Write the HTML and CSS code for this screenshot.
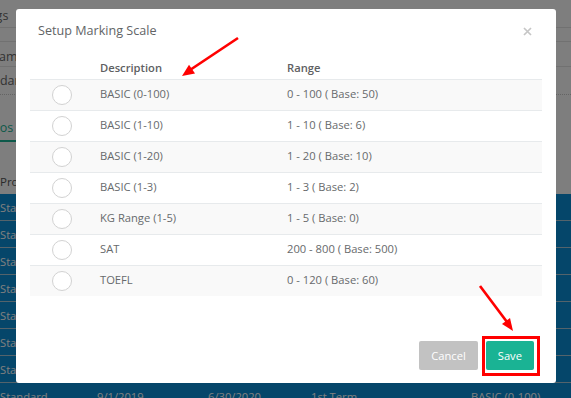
FILE: index.html
```html
<!DOCTYPE html>
<html lang="en">
<head>
    <meta charset="UTF-8">
    <meta name="viewport" content="width=device-width, initial-scale=1.0">
    <title>Setup Marking Scale</title>
    <link rel="stylesheet" href="styles.css">
</head>
<body>
    <div class="page">
        <div class="crumb"><span class="cut cut-crumb">Settings</span></div>
        <div class="gap"></div>
        <div class="label"><span class="cut cut-label">Program</span></div>
        <div class="field"><span class="cut cut-field">Standard</span></div>
        <div class="tabs"><span class="tab"><span class="cut cut-tab">Scenarios</span></span></div>
        <div class="grid-head"><span class="cut cut-head">Program</span></div>
        <div class="grid" id="grid">
            <!-- rows are generated below -->
        </div>
    </div>

    <div class="backdrop"></div>

    <div class="modal">
        <div class="modal-header">
            <h4 class="modal-title">Setup Marking Scale</h4>
            <span class="close">
                <svg width="9" height="9" viewBox="0 0 9 9"><path d="M1 1 L8 8 M8 1 L1 8" stroke="#c6c6c6" stroke-width="1.7" fill="none"/></svg>
            </span>
        </div>
        <table class="scales">
            <thead>
                <tr>
                    <th class="col-radio"></th>
                    <th class="col-desc">Description</th>
                    <th>Range</th>
                </tr>
            </thead>
            <tbody id="scaleRows"></tbody>
        </table>
        <div class="modal-footer">
            <button class="btn btn-cancel">Cancel</button>
            <button class="btn btn-save">Save</button>
        </div>
    </div>

    <div class="highlight"></div>
    <svg class="arrows" width="571" height="398" viewBox="0 0 571 398">
        <line x1="238" y1="38" x2="190" y2="70" stroke="#f00" stroke-width="2.6"/>
        <polygon points="182,76 195,73.6 189,64.8" fill="#f00"/>
        <line x1="480" y1="286" x2="507" y2="322" stroke="#f00" stroke-width="2.6"/>
        <polygon points="513,331 502,324 510,318" fill="#f00"/>
    </svg>

    <script>
        const scales = [
            ['BASIC (0-100)', '0 - 100 ( Base: 50)'],
            ['BASIC (1-10)', '1 - 10 ( Base: 6)'],
            ['BASIC (1-20)', '1 - 20 ( Base: 10)'],
            ['BASIC (1-3)', '1 - 3 ( Base: 2)'],
            ['KG Range (1-5)', '1 - 5 ( Base: 0)'],
            ['SAT', '200 - 800 ( Base: 500)'],
            ['TOEFL', '0 - 120 ( Base: 60)']
        ];
        const scaleRows = document.getElementById('scaleRows');
        scales.forEach(s => {
            const tr = document.createElement('tr');
            tr.innerHTML = `<td class="pick"><span class="radio"></span></td><td>${s[0]}</td><td>${s[1]}</td>`;
            scaleRows.appendChild(tr);
        });

        // background grid rows (only what shows around the dialog)
        const grid = document.getElementById('grid');
        for (let i = 0; i < 8; i++) {
            const row = document.createElement('div');
            row.classList.add('grid-row');
            const cells = i < 7 ? ['Standard'] : ['Standard', '9/1/2019', '6/30/2020', '1st Term', 'BASIC (0-100)'];
            cells.forEach(t => {
                const cell = document.createElement('span');
                cell.textContent = t;
                row.appendChild(cell);
            });
            if (i < 7) row.classList.add('hidden-row');
            grid.appendChild(row);
        }
    </script>
</body>
</html>
```

FILE: styles.css
```css
body {
    margin: 0;
    width: 571px;
    height: 398px;
    overflow: hidden;
    font-family: "Open Sans", sans-serif;
    background: #fdfdfd;
    position: relative;
}
.page {
    font-size: 12.5px;
    color: #666;
}
.cut {
    display: inline-block;
    white-space: nowrap;
}
.crumb {
    height: 27px;
    line-height: 31px;
    border-bottom: 1px solid #e2e2e2;
}
.cut-crumb { margin-left: -38px; }
.gap {
    height: 13px;
    border-bottom: 1px solid #e2e2e2;
}
.label {
    height: 24px;
    line-height: 29px;
    border-bottom: 1px solid #e2e2e2;
}
.cut-label { margin-left: -33px; }
.field {
    height: 27px;
    line-height: 27px;
    border-bottom: 1px dotted #c8c8c8;
}
.cut-field { margin-left: -26px; }
.tabs {
    height: 46px;
}
.tab {
    display: inline-block;
    margin-top: 21px;
    width: 16px;
    height: 24px;
    line-height: 24px;
    overflow: hidden;
    color: #1ab394;
    border-bottom: 2px solid #1ab394;
}
.cut-tab { margin-left: -43px; }
.grid-head {
    height: 53px;
    line-height: 20px;
    box-sizing: border-box;
    padding-top: 31px;
    font-size: 11.5px;
    color: #555;
}
.grid {
    background: #0a8cd4;
}
.grid-row {
    display: grid;
    grid-template-columns: 97px 111px 103px 160px 1fr;
    height: 26px;
    line-height: 28px;
    font-size: 11.2px;
    color: #fff;
    border-bottom: 1px solid #a9c7d6;
    white-space: nowrap;
}
.hidden-row {
    grid-template-columns: 16px;
    overflow: hidden;
}
.hidden-row span {
    overflow: hidden;
}
.backdrop {
    position: absolute;
    inset: 0;
    background: rgba(0, 0, 0, 0.5);
}
.modal {
    position: absolute;
    top: 9px;
    left: 16px;
    width: 540px;
    height: 374px;
    box-sizing: border-box;
    padding: 0 14px 13px;
    background: #fff;
    border-radius: 3px;
    display: flex;
    flex-direction: column;
    color: #676a6c;
}
.modal-header {
    display: flex;
    justify-content: space-between;
    align-items: center;
    padding-top: 12px;
    margin-bottom: 14px;
}
.modal-title {
    margin: 0 0 0 8px;
    font-size: 12.6px;
    font-weight: 400;
    line-height: 20px;
    color: #626466;
}
.close {
    display: flex;
    margin-right: 10px;
}
.scales {
    width: 100%;
    border-collapse: separate;
    border-spacing: 0;
    font-size: 11.2px;
}
.scales th {
    height: 24px;
    padding: 0;
    text-align: left;
    font-weight: 600;
    color: #5e6062;
}
.scales .col-radio { width: 70px; }
.scales .col-desc { width: 187px; }
.scales td {
    height: 26px;
    padding: 0 0 4px;
    border-top: 1px solid #e7eaec;
    vertical-align: middle;
}
.scales td.pick {
    padding: 0 0 1px;
    height: 29px;
}
.scales tbody tr:nth-child(odd) td {
    background: #f9f9f9;
}
.radio {
    display: block;
    width: 20px;
    height: 20px;
    margin-left: 22px;
    box-sizing: border-box;
    border: 1px solid #d2d2d2;
    border-radius: 50%;
    background: #fff;
}
.modal-footer {
    margin-top: auto;
    display: flex;
    justify-content: flex-end;
    gap: 8px;
    padding-right: 8px;
}
.btn {
    height: 29px;
    padding: 0 12px;
    border: none;
    border-radius: 2px;
    font-family: "Open Sans", sans-serif;
    font-size: 11.2px;
    color: #fff;
}
.btn-cancel {
    background: #c2c2c2;
}
.btn-save {
    background: #1ab394;
}
.highlight {
    position: absolute;
    left: 482px;
    top: 336px;
    width: 58px;
    height: 40px;
    box-sizing: border-box;
    border: 3px solid #f00;
}
.arrows {
    position: absolute;
    left: 0;
    top: 0;
}
```
